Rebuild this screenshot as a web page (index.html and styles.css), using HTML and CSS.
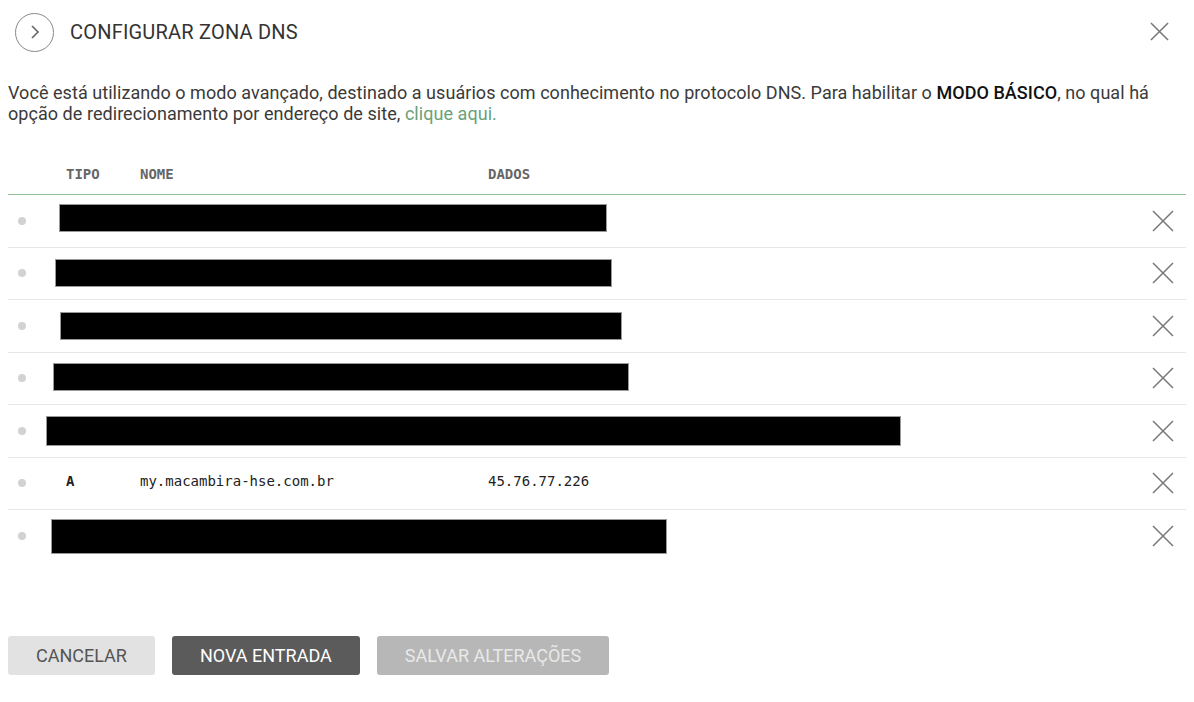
FILE: index.html
```html
<!DOCTYPE html>
<html lang="pt-BR">
<head>
    <meta charset="UTF-8">
    <meta name="viewport" content="width=device-width, initial-scale=1.0">
    <title>Configurar Zona DNS</title>
    <link rel="stylesheet" href="styles.css">
</head>
<body>
<div class="modal">
    <div class="head">
        <div class="head-left">
            <span class="round-btn">
                <svg width="14" height="16" viewBox="0 0 14 16"><path d="M4 2 L10 8 L4 14" fill="none" stroke="#666" stroke-width="1.6"/></svg>
            </span>
            <h1 class="title">CONFIGURAR ZONA DNS</h1>
        </div>
        <span class="close">
            <svg width="19" height="19" viewBox="0 0 20 20"><path d="M1 1 L19 19 M19 1 L1 19" stroke="#777" stroke-width="1.6"/></svg>
        </span>
    </div>

    <p class="intro">Você está utilizando o modo avançado, destinado a usuários com conhecimento no protocolo DNS. Para habilitar o <b>MODO BÁSICO</b>, no qual há opção de redirecionamento por endereço de site, <a href="#">clique aqui.</a></p>

    <div class="table">
        <div class="thead">
            <span></span>
            <span>TIPO</span>
            <span>NOME</span>
            <span>DADOS</span>
            <span></span>
        </div>

        <div class="row">
            <span class="dot"></span>
            <span class="redact r1"></span>
            <span class="del"><svg width="22" height="22" viewBox="0 0 22 22"><path d="M1 1 L21 21 M21 1 L1 21" stroke="#777" stroke-width="1.5"/></svg></span>
        </div>
        <div class="row">
            <span class="dot"></span>
            <span class="redact r2"></span>
            <span class="del"><svg width="22" height="22" viewBox="0 0 22 22"><path d="M1 1 L21 21 M21 1 L1 21" stroke="#777" stroke-width="1.5"/></svg></span>
        </div>
        <div class="row">
            <span class="dot"></span>
            <span class="redact r3"></span>
            <span class="del"><svg width="22" height="22" viewBox="0 0 22 22"><path d="M1 1 L21 21 M21 1 L1 21" stroke="#777" stroke-width="1.5"/></svg></span>
        </div>
        <div class="row">
            <span class="dot"></span>
            <span class="redact r4"></span>
            <span class="del"><svg width="22" height="22" viewBox="0 0 22 22"><path d="M1 1 L21 21 M21 1 L1 21" stroke="#777" stroke-width="1.5"/></svg></span>
        </div>
        <div class="row">
            <span class="dot"></span>
            <span class="redact r5"></span>
            <span class="del"><svg width="22" height="22" viewBox="0 0 22 22"><path d="M1 1 L21 21 M21 1 L1 21" stroke="#777" stroke-width="1.5"/></svg></span>
        </div>
        <div class="row">
            <span class="dot"></span>
            <span class="cell type">A</span>
            <span class="cell">my.macambira-hse.com.br</span>
            <span class="cell">45.76.77.226</span>
            <span class="del"><svg width="22" height="22" viewBox="0 0 22 22"><path d="M1 1 L21 21 M21 1 L1 21" stroke="#777" stroke-width="1.5"/></svg></span>
        </div>
        <div class="row last">
            <span class="dot"></span>
            <span class="redact r7"></span>
            <span class="del"><svg width="22" height="22" viewBox="0 0 22 22"><path d="M1 1 L21 21 M21 1 L1 21" stroke="#777" stroke-width="1.5"/></svg></span>
        </div>
    </div>

    <div class="actions">
        <button class="btn btn-light">CANCELAR</button>
        <button class="btn btn-dark">NOVA ENTRADA</button>
        <button class="btn btn-off">SALVAR ALTERAÇÕES</button>
    </div>
</div>
</body>
</html>
```

FILE: styles.css
```css
* {
    margin: 0;
    padding: 0;
    box-sizing: border-box;
}
body {
    background: #fff;
    font-family: Roboto, "Liberation Sans", sans-serif;
    color: #333;
}
.modal {
    padding: 0 8px;
}

/* header */
.head {
    height: 64px;
    display: flex;
    align-items: center;
    justify-content: space-between;
}
.head-left {
    display: flex;
    align-items: center;
}
.round-btn {
    width: 39px;
    height: 39px;
    margin-left: 7px;
    border: 1.5px solid #888;
    border-radius: 50%;
    display: flex;
    align-items: center;
    justify-content: center;
}
.title {
    font-size: 20px;
    font-weight: 400;
    color: #333;
    margin-left: 16px;
    letter-spacing: 0.2px;
}
.close {
    display: flex;
    margin-right: 17px;
    margin-top: -2px;
}

.intro {
    margin-top: 18px;
    font-size: 18px;
    line-height: 21px;
    color: #3a3a3a;
    letter-spacing: 0.05px;
}
.intro b {
    font-weight: 500;
    color: #111;
}
.intro a {
    color: #6aa07a;
    text-decoration: none;
}

/* table */
.table {
    margin-top: 32px;
}
.thead,
.row {
    display: grid;
    grid-template-columns: 58px 74px 348px 1fr 46px;
    align-items: center;
}
.thead {
    height: 39px;
    border-bottom: 1px solid #8fbf93;
    font-family: "DejaVu Sans Mono", monospace;
    font-weight: bold;
    font-size: 14px;
    color: #666;
    padding-bottom: 2px;
}
.row {
    height: 52.5px;
    border-bottom: 1px solid #e6e6e6;
    font-family: "DejaVu Sans Mono", monospace;
    font-size: 14px;
    color: #222;
}
.row.last {
    border-bottom: none;
}
.dot {
    grid-column: 1;
    grid-row: 1;
    width: 8px;
    height: 8px;
    margin-left: 10px;
    border-radius: 50%;
    background: #d2d2d2;
}
.cell {
    margin-top: -4px;
}
.cell.type {
    font-weight: bold;
}
.redact {
    grid-column: 1 / 5;
    grid-row: 1;
    background: #000;
    border: 1px solid #999;
    height: 28px;
}
.r1 { margin-left: 51px; width: 548px; margin-top: -5px; }
.r2 { margin-left: 47px; width: 557px; }
.r3 { margin-left: 52px; width: 562px; }
.r4 { margin-left: 45px; width: 576px; margin-top: -3px; }
.r5 { margin-left: 38px; width: 855px; height: 30px; }
.r7 { margin-left: 43px; width: 616px; height: 35px; }
.del {
    grid-column: 5;
    grid-row: 1;
    display: flex;
    justify-content: flex-end;
    padding-right: 12px;
}

/* buttons */
.actions {
    display: flex;
    gap: 17px;
    margin-top: 73px;
}
.btn {
    height: 39px;
    border: none;
    border-radius: 3px;
    font-family: Roboto, "Liberation Sans", sans-serif;
    font-size: 18px;
    padding: 0 28px;
}
.btn-light {
    background: #e2e2e2;
    color: #555;
}
.btn-dark {
    background: #5b5b5b;
    color: #fff;
}
.btn-off {
    background: #b7b7b7;
    color: #e9e9e9;
}
```
